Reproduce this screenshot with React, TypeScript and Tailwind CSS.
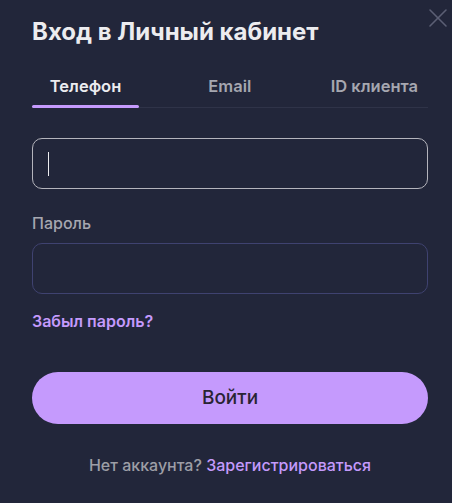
import { X } from 'lucide-react';

const TABS = ['Телефон', 'Email', 'ID клиента'];

export default function App() {
  return (
    <div
      className="relative w-[452px] h-[503px] bg-[#22263a] pl-8 pr-6 pt-[17px] overflow-hidden"
      style={{ fontFamily: 'Inter, "Noto Sans", sans-serif' }}
    >
      <button className="absolute -right-[2px] top-[2px] text-[#5b5f74]">
        <X className="w-8 h-8" strokeWidth={1.2} />
      </button>

      <h1 className="text-[24px] leading-[30px] font-bold text-[#ececef]">Вход в Личный кабинет</h1>

      <div className="mt-[29px] flex items-end justify-between border-b border-[#2f3348]">
        {TABS.map((t, i) => (
          <div
            key={t}
            className={
              'relative pb-[11px] text-[16.5px] leading-5 font-semibold ' +
              (i === 0 ? 'w-[107px] text-center text-[#ececef]' : 'text-[#a6a7b0] pr-[10px]')
            }
          >
            {t}
            {i === 0 && <span className="absolute left-0 right-0 -bottom-px h-[3px] rounded-full bg-[#c59afd]" />}
          </div>
        ))}
      </div>

      <div className="mt-[30px] h-[51px] rounded-[10px] border border-[#b4b4bc] flex items-center pl-[15px]">
        <span className="w-px h-6 bg-[#ececef]" />
      </div>

      <div className="mt-[24px] text-[16px] leading-5 font-medium text-[#a6a7b0]">Пароль</div>
      <div className="mt-[10px] h-[51px] rounded-[10px] border border-[#3f4270]" />

      <div className="mt-[17px] text-[16px] leading-5 font-semibold text-[#c49afc]">Забыл пароль?</div>

      <button className="mt-[41px] w-full h-[52px] rounded-full bg-[#c59afd] text-[19px] font-medium text-[#2a2433]">
        Войти
      </button>

      <div className="mt-[31px] text-center text-[16px] leading-5 font-medium">
        <span className="text-[#9d9ea6]">Нет аккаунта? </span>
        <span className="text-[#c49afc]">Зарегистрироваться</span>
      </div>
    </div>
  );
}
